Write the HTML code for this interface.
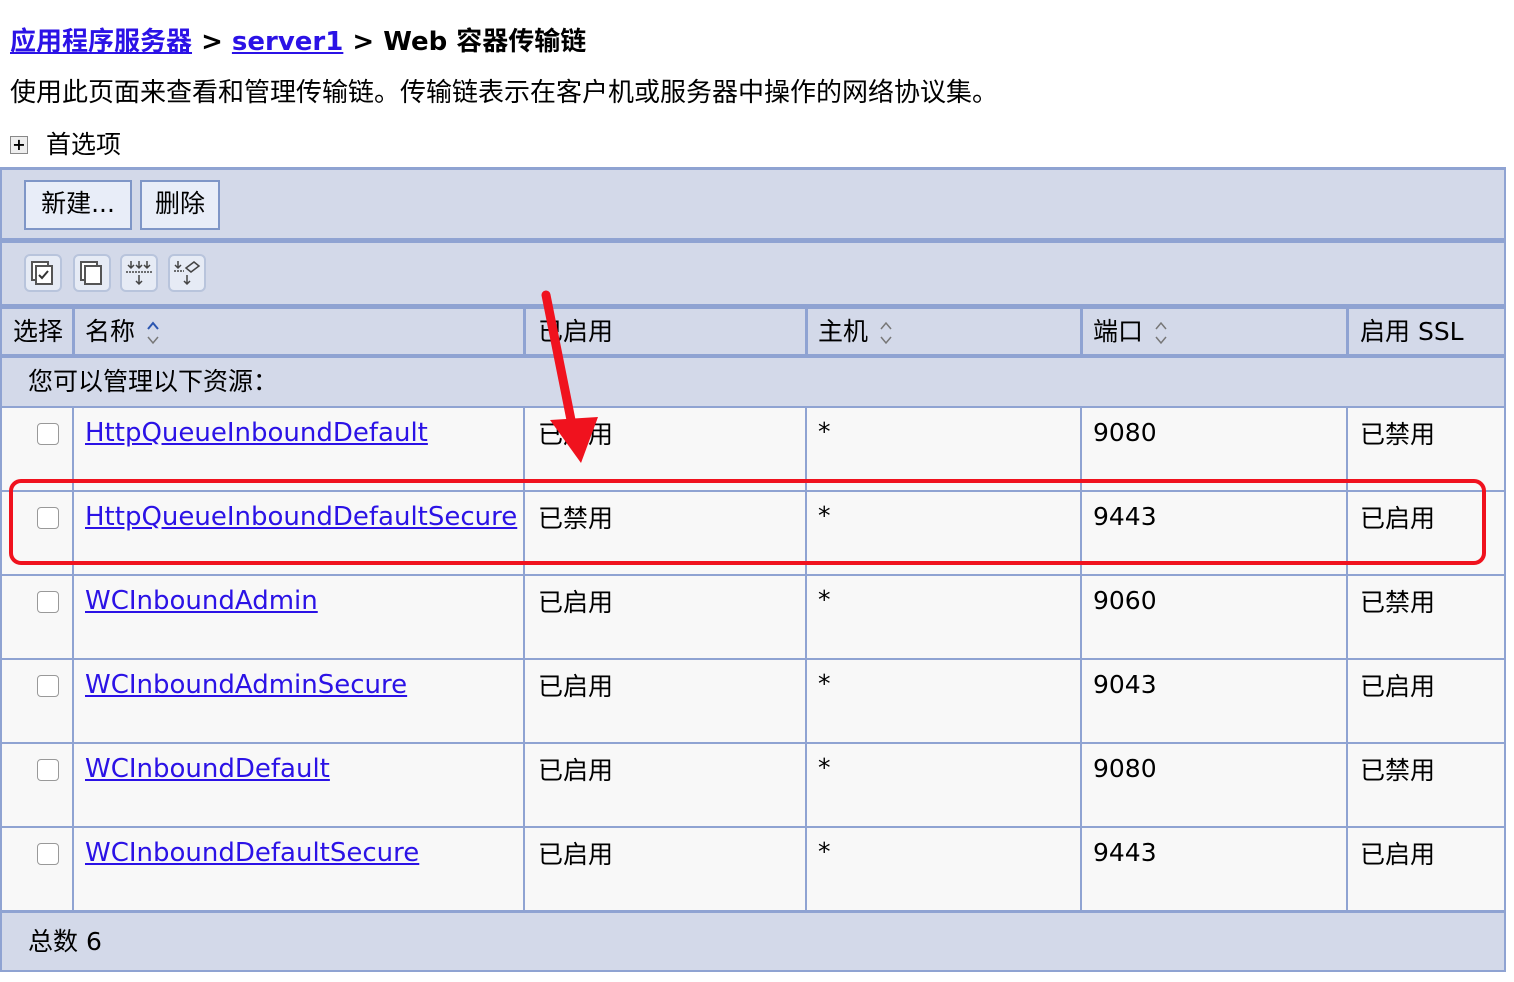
<!DOCTYPE html><html><head><meta charset="utf-8"><style>
body{margin:0;width:1514px;height:982px;background:#fff;font-family:"DejaVu Sans","Noto Sans CJK SC",sans-serif;position:relative;overflow:hidden;color:#000}
.a{position:absolute;white-space:nowrap}
.c{position:absolute;box-sizing:border-box}
.p{background:#d3d9e9}
.d{background:#f8f8f8}
a{color:#2b12e6;text-decoration:underline}
.t{font-size:25px;line-height:32px}
.btn{position:absolute;background:#e8edf8;border:2px solid #7f96c7;box-sizing:border-box;font-size:25px;line-height:44px;text-align:center}
.ic{position:absolute;top:254px;width:38px;height:38px;border:2px solid #b8c4dc;border-radius:6px;background:#e6ebf5;box-sizing:border-box}
.cb{position:absolute;width:22px;height:22px;border:1.5px solid #999;border-radius:4px;background:#fff;box-sizing:border-box;left:37px}
.s{display:inline-block;vertical-align:middle;margin-left:10px}
</style></head><body>
<div class="a" style="left:10px;top:24px;font-size:26px;font-weight:bold;line-height:36px"><a href="#">应用程序服务器</a> &gt; <a href="#">server1</a> &gt; Web 容器传输链</div>
<div class="a t" style="left:10px;top:77px;font-size:26px">使用此页面来查看和管理传输链。传输链表示在客户机或服务器中操作的网络协议集。</div>
<div class="a" style="left:10px;top:136px;width:16px;height:16px;border:1px solid #888;background:#eee;font-size:16px;line-height:15px;text-align:center;font-weight:bold">+</div>
<div class="a t" style="left:46px;top:129px">首选项</div>
<div class="c" style="left:0;top:167px;width:1506px;height:805px;background:#8fa3d2"></div>
<div class="c p" style="left:2px;top:170px;width:1502px;height:68px"></div>
<div class="btn" style="left:24px;top:180px;width:108px;height:50px">新建...</div>
<div class="btn" style="left:140px;top:180px;width:80px;height:50px">删除</div>
<div class="c p" style="left:2px;top:243px;width:1502px;height:61px"></div>
<div class="ic" style="left:24px"><svg width="34" height="34"><rect x="6" y="6" width="16" height="18" fill="#fff" stroke="#555" stroke-width="2"/><rect x="10" y="10" width="16" height="18" fill="#fff" stroke="#555" stroke-width="2"/><path d="M13 19l3 3 6-7" stroke="#333" stroke-width="2" fill="none"/></svg></div>
<div class="ic" style="left:73px"><svg width="34" height="34"><rect x="6" y="6" width="16" height="18" fill="#fff" stroke="#555" stroke-width="2"/><rect x="10" y="10" width="16" height="18" fill="#fff" stroke="#555" stroke-width="2"/></svg></div>
<div class="ic" style="left:120px"><svg width="34" height="34" stroke="#444" stroke-width="1.5" fill="none"><path d="M9 5v7M6 9l3 3 3-3M17 5v7M14 9l3 3 3-3M25 5v7M22 9l3 3 3-3"/><path d="M4 16h26" stroke-dasharray="2 1"/><path d="M17 19v9M14 25l3 3 3-3"/></svg></div>
<div class="ic" style="left:168px"><svg width="34" height="34" stroke="#444" stroke-width="1.5" fill="none"><path d="M8 5v7M5 9l3 3 3-3"/><path d="M4 15h10" stroke-dasharray="2 1"/><path d="M16 12l8-6 5 4-8 6z"/><path d="M17 19v9M14 25l3 3 3-3"/></svg></div>
<div class="c p" style="left:2px;top:309px;width:70px;height:45px"></div>
<div class="c p" style="left:75px;top:309px;width:448px;height:45px"></div>
<div class="c p" style="left:526px;top:309px;width:279px;height:45px"></div>
<div class="c p" style="left:808px;top:309px;width:272px;height:45px"></div>
<div class="c p" style="left:1083px;top:309px;width:263px;height:45px"></div>
<div class="c p" style="left:1349px;top:309px;width:155px;height:45px"></div>
<div class="a t" style="left:13px;top:316px">选择</div>
<div class="a t" style="left:85px;top:316px">名称<svg class="s" width="16" height="26"><path d="M3 9l5-6 5 6" stroke="#2a55b0" stroke-width="2" fill="none"/><path d="M3 17l5 6 5-6" stroke="#777" stroke-width="1.5" fill="none"/></svg></div>
<div class="a t" style="left:538px;top:316px">已启用</div>
<div class="a t" style="left:818px;top:316px">主机<svg class="s" width="16" height="26"><path d="M3 9l5-6 5 6M3 17l5 6 5-6" stroke="#777" stroke-width="1.5" fill="none"/></svg></div>
<div class="a t" style="left:1093px;top:316px">端口<svg class="s" width="16" height="26"><path d="M3 9l5-6 5 6M3 17l5 6 5-6" stroke="#777" stroke-width="1.5" fill="none"/></svg></div>
<div class="a t" style="left:1360px;top:316px">启用 SSL</div>
<div class="c p" style="left:2px;top:358px;width:1502px;height:48px"></div>
<div class="a t" style="left:28px;top:366px">您可以管理以下资源：</div>
<div id="rows"></div>
<script>
var r=[["HttpQueueInboundDefault","已启用","9080","已禁用"],["HttpQueueInboundDefaultSecure","已禁用","9443","已启用"],["WCInboundAdmin","已启用","9060","已禁用"],["WCInboundAdminSecure","已启用","9043","已启用"],["WCInboundDefault","已启用","9080","已禁用"],["WCInboundDefaultSecure","已启用","9443","已启用"]];
var h="",cols=[[2,70],[74,449],[525,280],[807,273],[1082,264],[1348,156]];
r.forEach(function(x,i){var t=408+i*84;cols.forEach(function(c){h+='<div class="c d" style="left:'+c[0]+'px;top:'+t+'px;width:'+c[1]+'px;height:82px"></div>'});
h+='<div class="cb" style="top:'+(t+15)+'px"></div>';
h+='<div class="a t" style="left:85px;top:'+(t+9)+'px;font-size:26px"><a href="#">'+x[0]+'</a></div>';
h+='<div class="a t" style="left:538px;top:'+(t+11)+'px">'+x[1]+'</div>';
h+='<div class="a t" style="left:818px;top:'+(t+8)+'px">*</div>';
h+='<div class="a t" style="left:1093px;top:'+(t+9)+'px">'+x[2]+'</div>';
h+='<div class="a t" style="left:1360px;top:'+(t+11)+'px">'+x[3]+'</div>';});
document.getElementById("rows").outerHTML=h;
</script>
<div class="c p" style="left:2px;top:913px;width:1502px;height:57px"></div>
<div class="a t" style="left:28px;top:926px">总数 6</div>
<svg class="a" style="left:0;top:0" width="1514" height="982">
<rect x="11" y="481" width="1473" height="82" rx="10" fill="none" stroke="#f0121e" stroke-width="4"/>
<path d="M546 295L572 425" stroke="#f0121e" stroke-width="9" stroke-linecap="round"/>
<path d="M550 420L598 417L581 463Z" fill="#f0121e"/>
</svg>
</body></html>
